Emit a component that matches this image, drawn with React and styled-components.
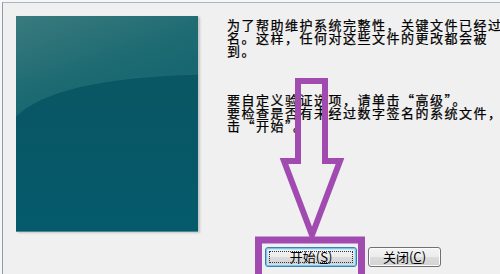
import React from 'react'
import styled, {createGlobalStyle} from 'styled-components'

const GlobalStyle = createGlobalStyle`
    html, body {
        margin: 0;
        padding: 0;
        background: #f6f6f6;
    }
    body {
        font-family: "Noto Sans CJK SC", "Noto Sans", sans-serif;
    }
`

const Page = styled.div`
    position: relative;
    width: 500px;
    height: 274px;
    overflow: hidden;
    background: #f6f6f6;
`

const Window = styled.div`
    margin: 2px 0 0 2px;
    height: 272px;
    box-sizing: border-box;
    border-top: 1px solid #a9b3c1;
    border-left: 1px solid #8f9bab;
    background: #f0f0f0;
    padding: 13px 0 0 13px;
`

const Body = styled.div`
    display: flex;
    height: 216px;
`

const Banner = styled.div`
    width: 182px;
    height: 216px;
    flex: none;
    box-shadow: 2px 1px 2px rgba(0, 0, 0, 0.18);
    svg {
        display: block;
    }
`

const TextColumn = styled.div`
    flex: 1;
    min-width: 0;
    overflow: hidden;
    margin: 2px 0 0 29px;
    font-size: 13px;
    line-height: 13px;
    letter-spacing: 1.5px;
    color: #000;
    -webkit-text-stroke: 0.25px #000;
`

const Paragraph = styled.div`
    margin-bottom: ${p => p.gap || 0}px;
`

const Line = styled.div`
    white-space: nowrap;
`

const Footer = styled.div`
    display: flex;
    gap: 11px;
    margin: 15px 0 0 249px;
`

const Button = styled.button`
    width: ${p => p.w}px;
    height: 20px;
    box-sizing: border-box;
    padding: 0;
    font-family: "Noto Sans CJK SC", "Noto Sans", sans-serif;
    font-size: 13px;
    line-height: 16px;
    color: #000;
    border-radius: 3px;
    border: 1px solid ${p => (p.primary ? '#3c7fb1' : '#707070')};
    background: linear-gradient(#f4f4f4 0%, #ececec 48%, #dcdcdc 52%, #d2d2d2 100%);
    box-shadow: ${p =>
        p.primary ? 'inset 0 0 0 1px #7ec4e6, inset 0 0 0 2px #c4e5f6' : 'inset 0 0 0 1px #fcfcfc'};
    position: relative;
    u {
        text-decoration: underline;
        text-underline-offset: 1px;
    }
`

const FocusRing = styled.span`
    position: absolute;
    inset: 3px;
    border: 1px dotted #333;
    pointer-events: none;
`

const Overlay = styled.svg`
    position: absolute;
    left: 0;
    top: 0;
    pointer-events: none;
`

function BannerArt() {
    return (
        <svg width="182" height="216" viewBox="0 0 182 216">
            <defs>
                <linearGradient id="bg" x1="0" y1="0" x2="0.3" y2="1">
                    <stop offset="0" stopColor="#3a7b7e" />
                    <stop offset="0.35" stopColor="#1d6a72" />
                    <stop offset="1" stopColor="#035a6a" />
                </linearGradient>
                <linearGradient id="low" x1="0" y1="0" x2="0" y2="1">
                    <stop offset="0" stopColor="#0a5664" />
                    <stop offset="1" stopColor="#045a6b" />
                </linearGradient>
            </defs>
            <rect width="182" height="216" fill="url(#bg)" />
            <path d="M0 100 Q38 62 182 58 L182 216 L0 216 Z" fill="url(#low)" />
            <path d="M0 100 Q38 62 182 58" fill="none" stroke="#2a7077" strokeWidth="1" opacity="0.6" />
            <rect x="0" y="215" width="182" height="1" fill="#7fa7ad" opacity="0.6" />
        </svg>
    )
}

function App() {
    return (
        <Page>
            <GlobalStyle />
            <Window>
                <Body>
                    <Banner>
                        <BannerArt />
                    </Banner>
                    <TextColumn>
                        <Paragraph gap={36}>
                            <Line>为了帮助维护系统完整性，关键文件已经过</Line>
                            <Line>名。这样，任何对这些文件的更改都会被</Line>
                            <Line>到。</Line>
                        </Paragraph>
                        <Paragraph>
                            <Line>要自定义验证选项，请单击“高级”。</Line>
                            <Line>要检查是否有未经过数字签名的系统文件，</Line>
                            <Line>击“开始”。</Line>
                        </Paragraph>
                    </TextColumn>
                </Body>
                <Footer>
                    <Button primary w={92}>
                        开始(<u>S</u>)
                        <FocusRing />
                    </Button>
                    <Button w={73}>
                        关闭(<u>C</u>)
                    </Button>
                </Footer>
            </Window>
            <Overlay width="500" height="274" viewBox="0 0 500 274">
                <polygon
                    points="298,81 325,81 325,161 340,161 312,235 284,161 298,161"
                    fill="none"
                    stroke="#a14bb1"
                    strokeWidth="6"
                    strokeLinejoin="miter"
                />
                <rect x="258.5" y="240" width="103" height="50" fill="none" stroke="#a14bb1" strokeWidth="7" />
            </Overlay>
        </Page>
    )
}

export default App
